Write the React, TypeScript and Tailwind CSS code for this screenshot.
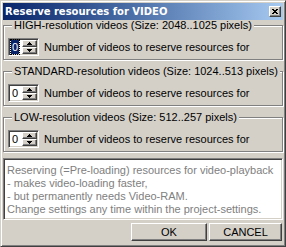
import React from "react";

const body = { fontFamily: '"Liberation Sans", Arial, sans-serif' };

const raised =
  "border border-t-white border-l-white border-r-[#404040] border-b-[#404040] shadow-[inset_-1px_-1px_0_#808080] bg-[#d4d0c8]";
const sunken =
  "border border-t-[#808080] border-l-[#808080] border-r-white border-b-white shadow-[inset_1px_1px_0_#404040,inset_-1px_-1px_0_#d4d0c8]";

function Arrow({ up }: { up?: boolean }) {
  return (
    <svg width="5" height="3" viewBox="0 0 5 3" shapeRendering="crispEdges">
      {up ? (
        <>
          <rect x="2" y="0" width="1" height="1" fill="#000" />
          <rect x="1" y="1" width="3" height="1" fill="#000" />
          <rect x="0" y="2" width="5" height="1" fill="#000" />
        </>
      ) : (
        <>
          <rect x="0" y="0" width="5" height="1" fill="#000" />
          <rect x="1" y="1" width="3" height="1" fill="#000" />
          <rect x="2" y="2" width="1" height="1" fill="#000" />
        </>
      )}
    </svg>
  );
}

function Spin({ focused }: { focused?: boolean }) {
  return (
    <div className={`flex h-[18px] w-[31px] shrink-0 bg-white p-[1px] ${sunken}`}>
      <div className="flex flex-1 items-stretch pl-[1px] text-[11px] leading-[14px] text-black">
        <span className={focused ? "bg-[#0a246a] px-[1px] text-white outline-1 outline-dotted outline-black" : "px-[1px]"}>0</span>
      </div>
      <div className="flex w-[15px] flex-col">
        <div className={`flex h-[7px] items-center justify-center ${raised}`}>
          <Arrow up />
        </div>
        <div className={`flex h-[7px] items-center justify-center ${raised}`}>
          <Arrow />
        </div>
      </div>
    </div>
  );
}

function Group({ title, focused }: { title: string; focused?: boolean }) {
  return (
    <fieldset className="mx-[1px] min-w-0 border border-[#808080] px-[4px] pt-[7px] pb-[3px] shadow-[inset_1px_1px_0_#fff,1px_1px_0_#fff]">
      <legend className="ml-[4px] whitespace-nowrap bg-[#d4d0c8] px-[2px] text-[11px] leading-[11px] text-black">{title}</legend>
      <div className="flex items-center gap-[5px]">
        <Spin focused={focused} />
        <span className="whitespace-nowrap text-[11px] leading-[13px] text-black">Number of videos to reserve resources for</span>
      </div>
    </fieldset>
  );
}

export default function App() {
  return (
    <div
      style={body}
      className="flex h-[247px] w-[286px] flex-col border border-t-[#d4d0c8] border-l-[#d4d0c8] border-r-[#404040] border-b-[#404040] bg-[#d4d0c8] p-[1px] shadow-[inset_1px_1px_0_#fff,inset_-1px_-1px_0_#808080]"
    >
      <div className="ml-[1px] mr-[1px] mt-[1px] flex h-[17px] shrink-0 items-center justify-between bg-linear-to-r from-[#0a246a] to-[#a6caf0] pl-[2px] pr-[2px]">
        <span className="text-[10px] font-bold leading-[17px] text-white" style={{ fontFamily: '"DejaVu Sans", Verdana, sans-serif' }}>
          Reserve resources for VIDEO
        </span>
        <div className={`flex h-[11px] w-[12px] items-center justify-center ${raised}`}>
          <svg width="6" height="5" viewBox="0 0 6 5" shapeRendering="crispEdges">
            <path d="M0 0h2v1h2V0h2v1H5v1H4v1h1v1h1v1H4V4H2v1H0V4h1V3h1V2H1V1H0z" fill="#000" />
          </svg>
        </div>
      </div>

      <div className="flex flex-col gap-[6px]">
        <Group title="HIGH-resolution videos (Size: 2048..1025 pixels)" focused />
        <Group title="STANDARD-resolution videos (Size: 1024..513 pixels)" />
        <Group title="LOW-resolution videos (Size: 512..257 pixels)" />
      </div>

      <div className={`mx-[1px] mt-[6px] h-[62px] shrink-0 bg-white px-[3px] pt-[5px] text-[11px] leading-[13px] text-[#808080] ${sunken}`}>
        <div>Reserving (=Pre-loading) resources for video-playback</div>
        <div>- makes video-loading faster,</div>
        <div>- but permanently needs Video-RAM.</div>
        <div>Change settings any time within the project-settings.</div>
      </div>

      <div className="mt-[3px] flex justify-end gap-[2px] pr-[2px]">
        <button className={`h-[18px] w-[76px] text-[11px] leading-[14px] text-black ${raised}`}>OK</button>
        <button className={`h-[18px] w-[73px] text-[11px] leading-[14px] text-black ${raised}`}>CANCEL</button>
      </div>
    </div>
  );
}
